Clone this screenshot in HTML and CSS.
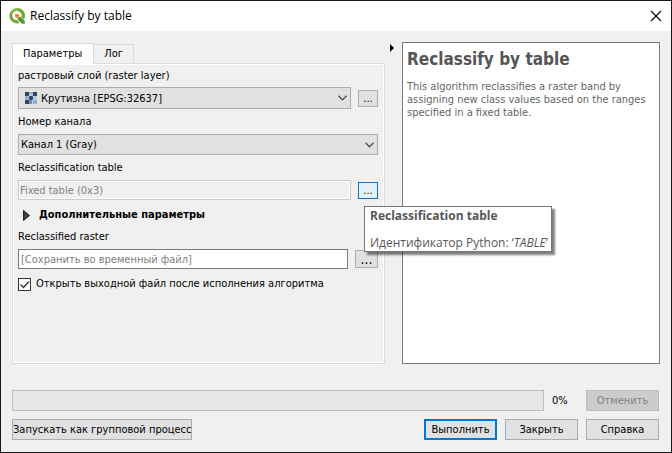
FILE: index.html
```html
<!DOCTYPE html>
<html lang="ru">
<head>
<meta charset="utf-8">
<title>Reclassify by table</title>
<link rel="stylesheet" href="styles.css">
</head>
<body>
<div class="window">
  <header class="titlebar">
    <svg class="logo" viewBox="0 0 16 16" aria-hidden="true">
      <path d="M8 0a7.700 7.700 0 1 0 2.500 15L8.700 12.200A4.700 4.700 0 1 1 12.400 9l2.600 2.400A7.700 7.700 0 0 0 8 0z" fill="#6fa536"/>
      <path d="M2 5.500A6.500 6.500 0 0 1 10.500 1.500" fill="none" stroke="#96c05c" stroke-width="1.500"/>
      <path d="M8.800 8.800h2.800l4.200 4.200v2.800h-2.900l-4.100-4.200z" fill="#5c9632"/>
      <path d="M6 6h3l1.500 1.500-2.700 2.700L6 8.500z" fill="#f0812c"/>
    </svg>
    <h1 class="caption">Reclassify by table</h1>
    <button class="close" type="button" aria-label="Закрыть окно">
      <svg viewBox="0 0 12 12" aria-hidden="true"><path d="M1 1l10 10M11 1L1 11" fill="none" stroke="#000" stroke-width="1.100"/></svg>
    </button>
  </header>

  <main class="content">
    <div class="workspace">
      <section class="params">
        <div class="tabs" role="tablist">
          <button class="tab tab-active" type="button" role="tab" aria-selected="true">Параметры</button>
          <button class="tab" type="button" role="tab" aria-selected="false">Лог</button>
        </div>
        <form class="panel">
          <label class="label" for="layer">растровый слой (raster layer)</label>
          <div class="row">
            <div class="combo combo-layer">
              <select id="layer"><option>Крутизна [EPSG:32637]</option></select>
              <svg class="raster" viewBox="0 0 12 12" shape-rendering="crispEdges" aria-hidden="true">
                <path d="M0 0h12v12H0z" fill="#b9cde5"/>
                <path d="M0 0h4v4H0zM8 0h4v4H8zM4 4h4v4H4zM0 8h4v4H0z" fill="#35465a"/>
                <path d="M4 4h1v1H4zM7 4h1v1H7zM4 7h1v1H4zM7 7h1v1H7z" fill="#647b97"/>
                <path d="M4 0h4v2H4zM0 4h4v4H0zM8 8h4v4H8z" fill="#93b1d5"/>
                <path d="M4 8h3v4H4z" fill="#6f8fb5"/>
              </svg>
              <svg class="chevron" viewBox="0 0 9 6" aria-hidden="true"><path d="M.5.8l4 4 4-4" fill="none" stroke="#505050" stroke-width="1.300"/></svg>
            </div>
            <button class="more" type="button" aria-label="Выбрать слой">...</button>
          </div>
          <label class="label" for="band">Номер канала</label>
          <div class="combo">
            <select id="band"><option>Канал 1 (Gray)</option></select>
            <svg class="chevron" viewBox="0 0 9 6" aria-hidden="true"><path d="M.5.8l4 4 4-4" fill="none" stroke="#505050" stroke-width="1.300"/></svg>
          </div>
          <label class="label" for="table">Reclassification table</label>
          <div class="row">
            <input class="field field-disabled" id="table" type="text" value="Fixed table (0x3)" disabled>
            <div class="anchor">
              <button class="more more-hover" type="button" aria-label="Изменить таблицу" aria-describedby="tip">...</button>
              <div class="tooltip" id="tip" role="tooltip">
                <strong>Reclassification table</strong>
                <span>Идентификатор Python: ‘<em>TABLE</em>’</span>
              </div>
            </div>
          </div>
          <button class="advanced" type="button" aria-expanded="false">
            <svg viewBox="0 0 7 11" aria-hidden="true"><path d="M.5.5v10l6-5z" fill="#404040" stroke="#202020"/></svg>
            Дополнительные параметры
          </button>
          <label class="label" for="output">Reclassified raster</label>
          <div class="row">
            <input class="field" id="output" type="text" placeholder="[Сохранить во временный файл]">
            <button class="more more-large" type="button" aria-label="Выбрать файл">...</button>
          </div>
          <label class="check">
            <span class="box">
              <input type="checkbox" checked>
              <svg viewBox="0 0 13 13" aria-hidden="true"><path d="M2.500 6.500l3 3 5.500-6" fill="none" stroke="#333" stroke-width="1.300"/></svg>
            </span>
            Открыть выходной файл после исполнения алгоритма
          </label>
        </form>
      </section>
      <button class="collapse" type="button" aria-label="Скрыть справку">
        <svg viewBox="0 0 4 8" aria-hidden="true"><path d="M0 0v8l4-4z"/></svg>
      </button>
      <aside class="help">
        <h2>Reclassify by table</h2>
        <p>This algorithm reclassifies a raster band by assigning new class values based on the ranges specified in a fixed table.</p>
      </aside>
    </div>

    <footer class="footer">
      <div class="status">
        <div class="progress" role="progressbar" aria-valuenow="0" aria-valuemin="0" aria-valuemax="100" aria-label="Ход выполнения"></div>
        <span class="percent">0%</span>
        <button class="button" type="button" disabled>Отменить</button>
      </div>
      <div class="actions">
        <button class="button button-batch" type="button">Запускать как групповой процесс</button>
        <button class="button button-default" type="button">Выполнить</button>
        <button class="button" type="button">Закрыть</button>
        <button class="button" type="button">Справка</button>
      </div>
    </footer>
  </main>
</div>
</body>
</html>
```
FILE: styles.css
```css
* {
  box-sizing: border-box;
}

body {
  margin: 0;
  font: 11px/16px "DejaVu Sans Condensed", "DejaVu Sans", sans-serif;
  color: #000;
}

button,
input,
select {
  margin: 0;
  font: inherit;
  color: inherit;
}

button {
  padding: 0;
}

svg {
  display: block;
}

.window {
  display: flex;
  flex-direction: column;
  min-height: 100vh;
  border: 1px solid #1b191c;
  background: #f0f0f0;
}

.titlebar {
  display: flex;
  align-items: center;
  height: 30px;
  padding: 0 9px 0 8px;
  background: #fff;
}

.logo {
  width: 16px;
  height: 16px;
}

.caption {
  flex: 1;
  margin: 0 0 0 5px;
  font: 12px/16px "Open Sans", "Noto Sans", sans-serif;
}

.close {
  border: 0;
  background: none;
}

.close svg {
  width: 12px;
  height: 12px;
}

.content {
  flex: 1;
  display: flex;
  flex-direction: column;
  padding: 11px 11px 12px;
}

.workspace {
  flex: 1;
  display: flex;
}

.params {
  flex: 373 1 373px;
  display: flex;
  flex-direction: column;
  min-width: 0;
}

.tabs {
  display: flex;
  align-items: flex-end;
  height: 21px;
}

.tab {
  height: 19px;
  padding: 0 10px;
  border: 1px solid #d9d9d9;
  border-width: 1px 1px 0 0;
  background: #f0f0f0;
}

.tab-active {
  position: relative;
  height: 21px;
  margin-bottom: -1px;
  padding: 0 11px 0 10px;
  border-left-width: 1px;
  background: #fff;
}

.panel {
  flex: 1;
  display: flex;
  flex-direction: column;
  padding: 4px 6px 4px 5px;
  border: 1px solid #dcdcdc;
  box-shadow: inset 0 0 0 1px #fff;
}

.label {
  margin: 5px 0 4px;
}

.label:first-child {
  margin: 0 0 3px;
}

.row {
  display: flex;
  align-items: center;
  gap: 7px;
}

.combo {
  position: relative;
  height: 21px;
}

.combo-layer {
  flex: 1;
  height: 22px;
}

.combo select {
  appearance: none;
  width: 100%;
  height: 100%;
  padding: 1px 24px 0 2px;
  border: 1px solid #adadad;
  border-radius: 0;
  background: #e1e1e1;
}

.combo-layer select {
  padding-left: 22px;
}

.raster {
  position: absolute;
  left: 7px;
  top: 5px;
  width: 12px;
  height: 12px;
  pointer-events: none;
}

.chevron {
  position: absolute;
  right: 4px;
  top: 8px;
  width: 9px;
  height: 6px;
  pointer-events: none;
}

.field {
  flex: 1;
  min-width: 0;
  height: 20px;
  padding: 0 2px;
  border: 1px solid #7a7a7a;
  border-radius: 0;
  background: #fff;
}

.field::placeholder {
  color: #808080;
}

.field-disabled {
  padding: 0 1px;
  border-color: #ccc;
  background: #f0f0f0;
  box-shadow: inset 0 0 0 1px #fff;
  color: #808080;
}

.more {
  display: block;
  width: 20px;
  height: 17px;
  border: 1px solid #adadad;
  background: #e1e1e1;
  line-height: 15px;
}

.more-hover {
  border-color: #0078d7;
  background: #e5f1fb;
}

.more-large {
  width: 23px;
  height: 18px;
  font-size: 14px;
}

.anchor {
  position: relative;
}

.tooltip {
  position: absolute;
  z-index: 1;
  left: 6px;
  top: 24px;
  display: flex;
  flex-direction: column;
  gap: 11px;
  min-width: 186px;
  padding: 1px 3px 0 5px;
  border: 1px solid #767676;
  background: #fff;
  box-shadow: 3px 3px 2px rgba(0, 0, 0, 0.5);
  color: #575757;
  font: 12px/16px "Open Sans", "Noto Sans", sans-serif;
  white-space: nowrap;
}

.advanced {
  display: flex;
  align-items: center;
  gap: 9px;
  margin: 7px 0 1px 5px;
  border: 0;
  background: none;
  font-weight: bold;
}

.advanced svg {
  width: 7px;
  height: 11px;
}

.check {
  display: flex;
  align-items: center;
  gap: 5px;
  margin-top: 7px;
}

.box {
  position: relative;
}

.box input {
  appearance: none;
  display: block;
  width: 13px;
  height: 13px;
  border: 1px solid #333;
  background: #fff;
}

.box svg {
  position: absolute;
  inset: 0;
  visibility: hidden;
  pointer-events: none;
}

.box input:checked + svg {
  visibility: visible;
}

.collapse {
  align-self: flex-start;
  width: 17px;
  padding: 2px 0 0 5px;
  border: 0;
  background: none;
}

.collapse svg {
  width: 4px;
  height: 8px;
}

.help {
  flex: 258 1 258px;
  min-width: 0;
  padding: 5px 4px;
  border: 1px solid #7a7a7a;
  background: #fff;
  color: #666;
}

.help h2 {
  margin: 0 0 10px;
  font: bold 17px/22px "DejaVu Sans Condensed", "DejaVu Sans", sans-serif;
  color: #555;
}

.help p {
  margin: 0;
  line-height: 13px;
}

.footer {
  display: flex;
  flex-direction: column;
  gap: 8px;
  margin-top: 26px;
  padding-right: 1px;
}

.status,
.actions {
  display: flex;
  gap: 8px;
}

.progress {
  flex: 1;
  border: 1px solid #bcbcbc;
  background: #e6e6e6;
}

.percent {
  width: 26px;
  line-height: 21px;
}

.button {
  width: 73px;
  height: 21px;
  border: 1px solid #adadad;
  background: #e1e1e1;
  line-height: 18px;
}

.button:disabled {
  border-color: #bfbfbf;
  background: #ccc;
  color: #838383;
}

.button-default {
  border: 2px solid #0078d7;
  line-height: 16px;
}

.button-batch {
  width: auto;
  margin-right: auto;
}
```
